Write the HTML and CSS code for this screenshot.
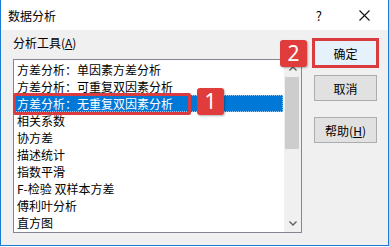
FILE: index.html
```html
<!DOCTYPE html>
<html lang="zh-CN">
<head>
  <meta charset="UTF-8">
  <title>数据分析</title>
  <link rel="stylesheet" href="styles.css">
</head>
<body>

  <div class="dialog">
    <div class="titlebar">
      <span class="title">数据分析</span>
      <span class="help">?</span>
      <svg class="close" width="11" height="11" viewBox="0 0 11 11">
        <path d="M0.5 0.5 L10.5 10.5 M10.5 0.5 L0.5 10.5" stroke="#111" stroke-width="1.1" fill="none"/>
      </svg>
    </div>

    <div class="content">
      <div class="tools">
        <div class="label">分析工具(<u>A</u>)</div>
        <div class="listbox">
          <ul class="items">
            <li>方差分析：单因素方差分析</li>
            <li>方差分析：可重复双因素分析</li>
            <li class="selected">方差分析：无重复双因素分析</li>
            <li>相关系数</li>
            <li>协方差</li>
            <li>描述统计</li>
            <li>指数平滑</li>
            <li>F-检验 双样本方差</li>
            <li>傅利叶分析</li>
            <li>直方图</li>
          </ul>
          <div class="scrollbar">
            <div class="arrow">
              <svg width="8" height="5" viewBox="0 0 8 5"><polyline points="0.5,4.5 4,1 7.5,4.5" stroke="#606060" stroke-width="1.4" fill="none"/></svg>
            </div>
            <div class="thumb"></div>
            <div class="track"></div>
            <div class="arrow">
              <svg width="8" height="5" viewBox="0 0 8 5"><polyline points="0.5,0.5 4,4 7.5,0.5" stroke="#606060" stroke-width="1.4" fill="none"/></svg>
            </div>
          </div>
        </div>
      </div>

      <div class="buttons">
        <button class="btn primary">确定</button>
        <button class="btn">取消</button>
        <button class="btn help-btn">帮助(<u>H</u>)</button>
      </div>
    </div>

    <!-- annotations -->
    <div class="mark mark-item"></div>
    <div class="mark mark-ok"></div>
    <div class="badge badge-1">1</div>
    <div class="badge badge-2">2</div>
  </div>

</body>
</html>
```

FILE: styles.css
```css
body { margin: 0; font-family: "Noto Sans CJK SC", "Noto Sans", sans-serif; font-size: 12px; color: #000; background: #fff; }
.dialog { position: relative; width: 389px; height: 246px; box-sizing: border-box; background: #f0f0f0; border: 1px solid #1a7bd3; border-top: none; }

.titlebar { height: 30px; background: #fff; display: flex; align-items: center; padding-left: 7px; }
.title { flex: 1; font-size: 12px; }
.help { font-size: 13px; margin-right: 37px; }
.close { margin-right: 18px; }

.content { display: flex; align-items: flex-start; padding: 5px 0 0 12px; }
.tools { width: 289px; }
.label { height: 16px; line-height: 16px; margin-bottom: 8px; }
.listbox { display: flex; height: 174px; box-sizing: border-box; border: 1px solid #828790; background: #fff; }

.items { flex: 1; list-style: none; margin: 0; padding: 1px 0 0; }
.items li { height: 17px; line-height: 17px; margin: 0 1px; padding-left: 2px; white-space: nowrap; }
.items li.selected { background: #0078d7; color: #fff; outline: 1px dotted #8fc6f2; outline-offset: -1px; }

.scrollbar { width: 17px; display: flex; flex-direction: column; background: #f0f0f0; }
.arrow { height: 17px; display: flex; align-items: center; justify-content: center; }
.thumb { height: 72px; margin: 0 2px 0 1px; background: #cdcdcd; }
.track { flex: 1; }

.buttons { display: flex; flex-direction: column; margin-left: 12px; padding-top: 5px; }
.btn { width: 63px; height: 26px; box-sizing: border-box; border: 1px solid #adadad; background: #e1e1e1; font-family: inherit; font-size: 12px; padding: 0; color: #000; margin-bottom: 9px; }
.btn.primary { background: #e5f1fb; border-color: #0078d7; outline: 3px solid #d93b3f; outline-offset: -1px; }
.btn.help-btn { margin-top: 7px; }

.mark { position: absolute; border: 3px solid #d93b3f; border-radius: 2px; box-sizing: border-box; }
.mark-item { left: 12px; top: 93px; width: 178px; height: 22px; }
.mark-ok { display: none; }

.badge { position: absolute; width: 27px; height: 27px; background: #e03c3c; color: #fff; border-radius: 3px; font-family: "Noto Sans", sans-serif; font-size: 21px; line-height: 27px; text-align: center; box-shadow: 1px 1px 2px rgba(0,0,0,0.3); }
.badge-1 { left: 196px; top: 88px; }
.badge-2 { left: 279px; top: 40px; }
```
